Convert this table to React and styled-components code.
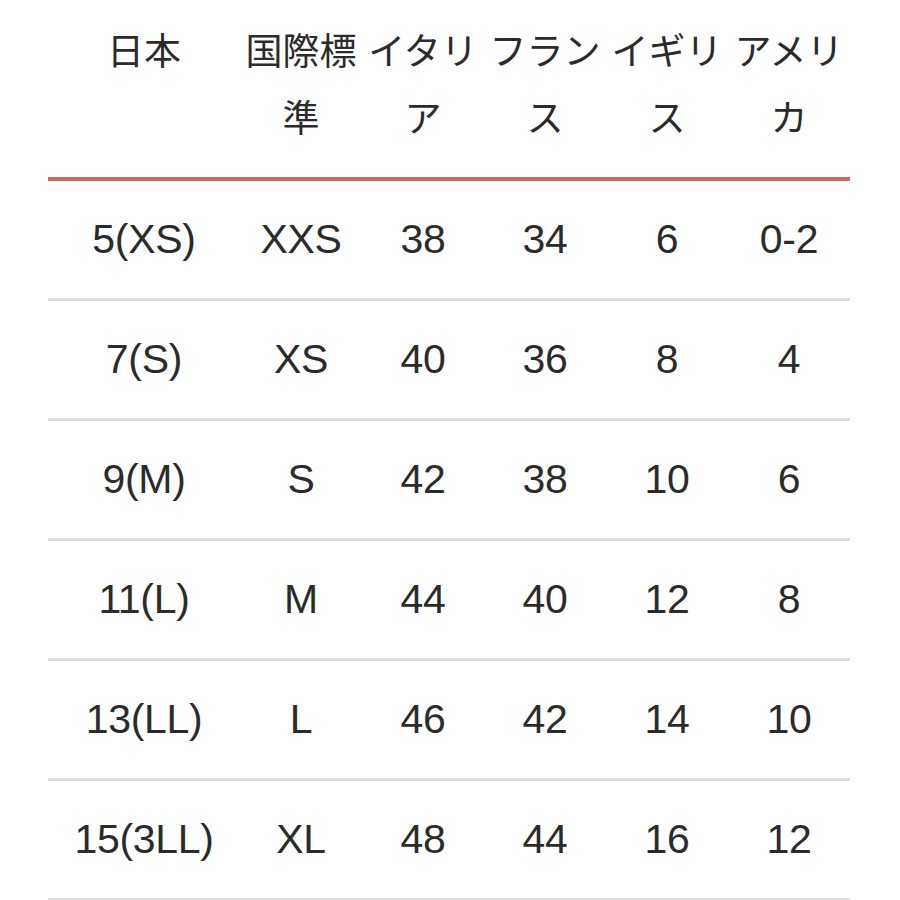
import React from 'react'
import styled, { createGlobalStyle } from 'styled-components'

const GlobalStyle = createGlobalStyle`
  html, body {
    margin: 0;
    padding: 0;
    background: #ffffff;
  }
`

const Page = styled.div`
  width: 900px;
  height: 900px;
  overflow: hidden;
  padding-left: 48px;
  box-sizing: border-box;
  background: #ffffff;
  font-family: "Liberation Sans", "Noto Sans CJK JP", sans-serif;
  color: #2b2b2b;
`

const Table = styled.table`
  width: 802px;
  border-collapse: collapse;
  table-layout: fixed;
`

const HeadCell = styled.th`
  width: ${({ $wide }) => ($wide ? '192px' : '122px')};
  height: 179px;
  padding: 16px 0 0;
  box-sizing: border-box;
  vertical-align: top;
  font-family: "Noto Sans CJK JP", sans-serif;
  font-size: 37px;
  font-weight: 400;
  line-height: 67px;
  text-align: center;
  border-bottom: 4px solid #d26b5f;
`

const Row = styled.tr`
  height: 120px;
  border-bottom: 3px solid #dddddd;
`

const Cell = styled.td`
  padding: 0;
  font-size: 41px;
  line-height: 1;
  text-align: center;
  vertical-align: middle;
  white-space: nowrap;
  letter-spacing: -0.3px;
`

const headers = ['日本', '国際標準', 'イタリア', 'フランス', 'イギリス', 'アメリカ']

const rows = [
  ['5(XS)', 'XXS', '38', '34', '6', '0-2'],
  ['7(S)', 'XS', '40', '36', '8', '4'],
  ['9(M)', 'S', '42', '38', '10', '6'],
  ['11(L)', 'M', '44', '40', '12', '8'],
  ['13(LL)', 'L', '46', '42', '14', '10'],
  ['15(3LL)', 'XL', '48', '44', '16', '12']
]

const App = () => (
  <Page>
    <GlobalStyle />
    <Table>
      <thead>
        <tr>
          {headers.map((h, i) => (
            <HeadCell key={h} $wide={i === 0}>{h}</HeadCell>
          ))}
        </tr>
      </thead>
      <tbody>
        {rows.map((r) => (
          <Row key={r[0]}>
            {r.map((c, i) => (
              <Cell key={i}>{c}</Cell>
            ))}
          </Row>
        ))}
      </tbody>
    </Table>
  </Page>
)

export default App
